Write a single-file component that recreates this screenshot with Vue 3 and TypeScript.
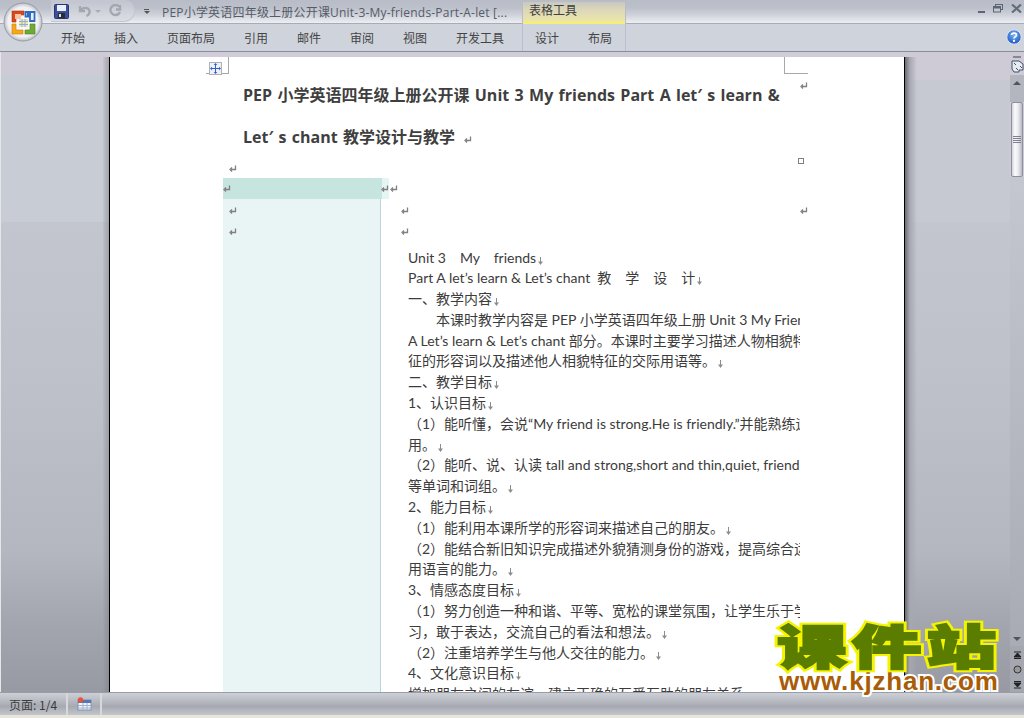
<script setup lang="ts">
const tabs: string[] = ['开始', '插入', '页面布局', '引用', '邮件', '审阅', '视图', '开发工具']
const lines: { t: string; mark: boolean }[] = [
  { t: 'Unit 3　My　friends', mark: true },
  { t: 'Part A let’s learn & Let’s chant\u2009\u2009 教　学　设　计', mark: true },
  { t: '一、教学内容', mark: true },
  { t: '　　本课时教学内容是 PEP 小学英语四年级上册 Unit 3 My Friends Part', mark: false },
  { t: 'A Let’s learn & Let’s chant 部分。本课时主要学习描述人物相貌特', mark: false },
  { t: '征的形容词以及描述他人相貌特征的交际用语等。', mark: true },
  { t: '二、教学目标', mark: true },
  { t: '1、认识目标', mark: true },
  { t: '（1）能听懂，会说“My friend is strong.He is friendly.”并能熟练运', mark: false },
  { t: '用。', mark: true },
  { t: '（2）能听、说、认读 tall and strong,short and thin,quiet, friendly', mark: false },
  { t: '等单词和词组。', mark: true },
  { t: '2、能力目标', mark: true },
  { t: '（1）能利用本课所学的形容词来描述自己的朋友。', mark: true },
  { t: '（2）能结合新旧知识完成描述外貌猜测身份的游戏，提高综合运', mark: false },
  { t: '用语言的能力。', mark: true },
  { t: '3、情感态度目标', mark: true },
  { t: '（1）努力创造一种和谐、平等、宽松的课堂氛围，让学生乐于学', mark: false },
  { t: '习，敢于表达，交流自己的看法和想法。', mark: true },
  { t: '（2）注重培养学生与他人交往的能力。', mark: true },
  { t: '4、文化意识目标', mark: true },
  { t: '增加朋友之间的友谊，建立正确的互爱互助的朋友关系。', mark: true },
]
</script>

<template>
  <div class="win">
    <svg class="defs" width="0" height="0">
      <symbol id="ret" viewBox="0 0 8 8">
        <path d="M6.500 .5V4.500H2M3 2.500L1 4.500L3 6.500" fill="none" stroke="#808080" stroke-width="1.300" />
      </symbol>
      <symbol id="brk" viewBox="0 0 5 8">
        <path d="M2.500 0V6" stroke="#8c8c8c" stroke-width="1" />
        <path d="M0 4.500H5L2.500 8Z" fill="#8c8c8c" />
      </symbol>
    </svg>

    <header class="titlebar">
      <div class="qat">
        <svg class="ico" width="15" height="15" viewBox="0 0 15 15">
          <rect x=".5" y=".5" width="14" height="14" rx="1" fill="#3c4f9c" stroke="#2a3570" />
          <rect x="3" y="1" width="9" height="6" fill="#e8eefa" />
          <rect x="4" y="9" width="7" height="5" fill="#2c2c34" />
          <rect x="5" y="10" width="2" height="3" fill="#e0e0e0" />
        </svg>
        <svg class="ico undo" width="15" height="14" viewBox="0 0 15 14">
          <path d="M3 2V7H8M3.500 6.500C6 3 11 3 12.500 6.500C13 9 11.500 11 9.500 12" fill="none" stroke="#a4a7b0" stroke-width="2.400" />
        </svg>
        <span class="drop grey"></span>
        <svg class="ico redo" width="13" height="14" viewBox="0 0 13 14">
          <path d="M10 2.500A5 5 0 1 0 11 8M11 1V5.500H7" fill="none" stroke="#a4a7b0" stroke-width="2.400" />
        </svg>
      </div>
      <span class="qat-more"><i></i><b></b></span>
      <span class="doc-title">PEP小学英语四年级上册公开课Unit-3-My-friends-Part-A-let [...</span>
      <div class="context-head"><span>表格工具</span></div>
      <div class="winbtns">
        <span class="w-min"></span>
        <svg width="10" height="9" viewBox="0 0 10 9">
          <rect x="2.500" y=".5" width="7" height="5" fill="none" stroke="#5d6472" />
          <rect x=".5" y="2.500" width="7" height="5.500" fill="#c6c9d2" stroke="#5d6472" />
          <rect x="1" y="3" width="6" height="1.500" fill="#5d6472" />
        </svg>
        <svg width="11" height="9" viewBox="0 0 11 9">
          <path d="M1 .5L10 8.500M10 .5L1 8.500" stroke="#666d7a" stroke-width="2.200" />
        </svg>
      </div>
    </header>

    <nav class="ribbon">
      <span v-for="t in tabs" :key="t" class="tab">{{ t }}</span>
      <div class="context-tabs">
        <span class="tab">设计</span>
        <span class="tab">布局</span>
      </div>
      <svg class="help" width="16" height="16" viewBox="0 0 16 16">
        <defs>
          <radialGradient id="hg" cx=".5" cy=".35" r=".7">
            <stop offset="0" stop-color="#7fb4f0" />
            <stop offset="1" stop-color="#0f4fc0" />
          </radialGradient>
        </defs>
        <circle cx="8" cy="8" r="7.200" fill="url(#hg)" stroke="#dfe6f2" />
        <path d="M5.500 6C5.700 3.500 10.500 3.500 10.500 6C10.500 7.800 8 7.600 8 9.500" fill="none" stroke="#fff" stroke-width="1.700" />
        <rect x="7" y="10.800" width="2" height="2" fill="#fff" />
      </svg>
    </nav>

    <main class="workspace">
      <div class="gutter-left"><div class="strip"></div></div>
      <section class="page">
        <div class="doc-head">
          <div class="doc-h">PEP 小学英语四年级上册公开课 Unit 3 My friends Part A let<span class="prime">′</span>s learn &amp;</div>
          <div class="doc-h">Let<span class="prime">′</span>s chant 教学设计与教学<svg class="ret after-h"><use href="#ret" /></svg></div>
        </div>
        <div class="mark-row"><svg class="ret"><use href="#ret" /></svg></div>
        <div class="tbl">
          <div class="cell-left">
            <div class="cell-head">
              <svg class="ret"><use href="#ret" /></svg>
              <svg class="ret"><use href="#ret" /></svg>
            </div>
            <div class="cell-mark"><svg class="ret"><use href="#ret" /></svg></div>
            <div class="cell-mark"><svg class="ret"><use href="#ret" /></svg></div>
          </div>
          <div class="cell-right">
            <div class="r-first"><svg class="ret"><use href="#ret" /></svg></div>
            <div class="r-mark"><svg class="ret"><use href="#ret" /></svg></div>
            <div class="r-mark"><svg class="ret"><use href="#ret" /></svg></div>
            <div class="body">
              <div v-for="(l, i) in lines" :key="i" class="ln">{{ l.t }}<svg v-if="l.mark" class="brk"><use href="#brk" /></svg></div>
            </div>
          </div>
        </div>
        <span class="crop crop-l"></span>
        <span class="crop crop-r"></span>
        <span class="handle">
          <svg width="11" height="11" viewBox="0 0 11 11">
            <path d="M5.500 0L7.300 2H6V5H9V3.700L11 5.500L9 7.300V6H6V9H7.300L5.500 11L3.700 9H5V6H2V7.300L0 5.500L2 3.700V5H5V2H3.700Z" fill="#2f62c8" />
          </svg>
        </span>
        <svg class="ret abs m1"><use href="#ret" /></svg>
        <svg class="ret abs m2"><use href="#ret" /></svg>
        <span class="sq"></span>
      </section>
      <div class="gutter-right"><div class="shadow"></div></div>
      <aside class="scroll">
        <div class="sb-grip"></div>
        <svg class="sb-ruler" width="13" height="13" viewBox="0 0 13 13">
          <path d="M1 1H8L12 4V10H8V12H3L1 9Z" fill="#e8eaf0" stroke="#40506c" />
          <path d="M3 3L5 5M9 6L11 8M5 8L7 10" stroke="#40506c" />
        </svg>
        <div class="sb-up"><i></i></div>
        <div class="sb-thumb"><i></i><i></i><i></i><i></i></div>
        <div class="sb-track"></div>
        <div class="sb-down"><i></i></div>
        <div class="sb-nav">
          <svg width="9" height="9" viewBox="0 0 9 9"><path d="M1 1H8M4.500 2L8 6H1Z M1 7.500H8" fill="#222" stroke="#222" /></svg>
          <svg width="9" height="9" viewBox="0 0 9 9"><circle cx="4.500" cy="4.500" r="3.500" fill="#999" stroke="#333" /></svg>
          <svg width="9" height="9" viewBox="0 0 9 9"><path d="M1 1.500H8M1 3H8L4.500 7Z M1 8H8" fill="#222" stroke="#222" /></svg>
        </div>
      </aside>

      <div class="watermark">
        <div class="wm-cn" data-t="课件站">课件站</div>
        <div class="wm-en">www.kjzhan.com</div>
      </div>
    </main>

    <footer class="status">
      <span class="st-cell st-page">页面: 1/4</span>
      <span class="st-cell st-icon">
        <svg width="15" height="14" viewBox="0 0 15 14">
          <rect x="1" y="3" width="13" height="10" fill="#f2f6fc" stroke="#7f93b4" />
          <rect x="1" y="3" width="13" height="3" fill="#5578b0" />
          <path d="M1 8.500H14M1 11H14M6 6V13M10 6V13" stroke="#9fb2cc" />
          <circle cx="3.500" cy="3" r="2.700" fill="#e0583a" />
        </svg>
      </span>
    </footer>
    <div class="foot-line"></div>

    <div class="office-btn">
      <svg width="46" height="44" viewBox="0 0 46 44">
        <defs>
          <radialGradient id="ob" cx=".5" cy=".5" r=".55">
            <stop offset="0" stop-color="#ffffff" />
            <stop offset=".72" stop-color="#f0f0f3" />
            <stop offset=".86" stop-color="#c9cbd2" />
            <stop offset="1" stop-color="#8f929c" />
          </radialGradient>
        </defs>
        <circle cx="23" cy="22" r="19" fill="url(#ob)" stroke="#9a9da6" />
        <path d="M12 11H24V15H16V22H12Z" fill="#d8481c" stroke="#a8320e" stroke-width=".6" />
        <rect x="15" y="14" width="6" height="5" fill="#f6c2a8" />
        <path d="M25.500 12H34.500V21H30V16.500H25.500Z" fill="#eaf0f8" stroke="#2f6bc0" stroke-width="1.800" />
        <rect x="27" y="13" width="4" height="3" fill="#2f6bc0" />
        <path d="M12 24H16V30H23V34H12Z" fill="#f5a81c" stroke="#cc8008" stroke-width=".6" />
        <path d="M25 30H30V24H35V34H25Z" fill="#6fab34" stroke="#4d7e1c" stroke-width=".6" />
        <rect x="19" y="19" width="9" height="8" fill="#f6e6ae" />
        <path d="M19 21.500H28M19 24.500H28M22 19V27M25 19V27" stroke="#8cb0d8" />
      </svg>
    </div>
  </div>
</template>

<style>
html, body { margin: 0; padding: 0; overflow: hidden; }
</style>

<style scoped>
.win {
  width: 1024px; height: 718px; display: flex; flex-direction: column; overflow: hidden; position: relative;
  font-family: "Noto Sans CJK SC", "Noto Sans", sans-serif; font-size: 12px; color: #444; background: #e8e5da;
}
.defs { position: absolute; }
.titlebar {
  height: 24px; flex: none; display: flex; align-items: center; position: relative; box-sizing: border-box;
  padding-left: 51px; border-bottom: 1px solid #a9acb6;
  background: linear-gradient(#b9bcc6 0, #bcc0ca 8px, #cfd2da 15px, #eceef3 23px);
}
.qat {
  width: 84px; height: 22px; box-sizing: border-box; display: flex; align-items: center; padding-left: 3px; margin-top: -1px;
  border: 1px solid #c4c7d0; border-left: 0; border-radius: 0 12px 12px 0; background: linear-gradient(#c2c5cf, #dcdee5);
}
.undo { margin-left: 8px; }
.drop { width: 0; height: 0; border: 3px solid transparent; border-top: 3px solid #a9acb6; border-bottom: 0; margin: 0 8px 0 3px; }
.qat-more { width: 7px; margin-left: 8px; display: flex; flex-direction: column; align-items: center; gap: 1px; }
.qat-more i { width: 5px; height: 1px; background: #555; }
.qat-more b { width: 0; height: 0; border: 3px solid transparent; border-top: 3px solid #555; border-bottom: 0; }
.doc-title { margin-left: 12px; font-family: "Open Sans", "Noto Sans CJK SC", sans-serif; font-size: 12px; letter-spacing: .2px; color: #555b68; white-space: nowrap; width: 358px; }
.context-head {
  position: absolute; left: 522px; top: 2px; width: 104px; height: 22px; box-sizing: border-box;
  border: 1px solid #b8bcc8; border-width: 0 1px; overflow: hidden;
  background: linear-gradient(#c8c8c0 0, #dcd8b8 8px, #ebe3ad 18px, #f9f06e 21px, #f0e7a5 23px);
}
.context-head span { position: absolute; left: 6px; top: -1px; line-height: 18px; font-size: 12px; color: #3e3e3e; }
.winbtns { position: absolute; right: 2px; top: 4px; display: flex; align-items: flex-start; gap: 8px; }
.w-min { width: 7px; height: 2px; background: #5d6472; margin-top: 7px; }
.ribbon {
  height: 28px; flex: none; display: flex; align-items: center; box-sizing: border-box; position: relative;
  padding-left: 61px; gap: 29px; background: #cfd3dc; border-bottom: 1px solid #8a8e98;
}
.tab { line-height: 18px; color: #444; white-space: nowrap; }
.context-tabs {
  position: absolute; left: 522px; top: 0; width: 104px; height: 27px; box-sizing: border-box; padding-left: 12px;
  display: flex; align-items: center; gap: 29px; border: 1px solid #b9bfd0; border-width: 0 1px;
}
.help { position: absolute; right: 2px; top: 5px; }
.workspace { flex: 1; min-height: 0; display: flex; position: relative; background: #d0cdd8; }
.gutter-left {
  width: 109px; flex: none; border-left: 1px solid #e4e6ea; box-sizing: border-box; position: relative;
  background: linear-gradient(#cfcbd6 0, #cfcbd6 22px, #c8ccd4 22px, #c8ccd4 170px, #c3c6ce 170px, #bec1ca 330px, #b4b7c0 500px, #a3a6ae 570px, #979aa3 100%);
}
.strip { position: absolute; right: 0; top: 5px; bottom: 0; width: 6px; background: linear-gradient(90deg, rgba(150,153,162,.15), rgba(120,123,132,.5)); }
.page {
  width: 796px; flex: none; box-sizing: border-box; position: relative; overflow: hidden;
  border: solid #000; border-width: 0 1px; background: #fff;
  margin-top: 5px; padding-top: 17px;
}
.doc-head { margin-left: 133px; }
.doc-h { font-family: "Open Sans", "Noto Sans CJK SC", sans-serif; font-weight: 700; font-size: 16px; line-height: 42px; color: #3f3f3f; white-space: nowrap; word-spacing: 1.200px; }
.prime { display: inline-block; width: 10px; line-height: 1; }
.ret { width: 8px; height: 8px; display: inline-block; flex: none; }
.after-h { margin-left: 9px; vertical-align: -1px; }
.mark-row { height: 20px; box-sizing: border-box; padding-top: 2px; margin-left: 119px; display: flex; align-items: center; }
.tbl { display: flex; margin-left: 113px; }
.cell-left { width: 157px; flex: none; background: #e9f5f5; border-right: 1px solid #bdd2e2; min-height: 600px; }
.cell-head {
  height: 21px; width: 166px; background: linear-gradient(90deg, #c5e5de 159px, #e6f4f4 159px); display: flex; align-items: center; justify-content: space-between;
  position: relative; z-index: 1; padding-right: 0;
}
.cell-mark { height: 21px; box-sizing: border-box; padding: 2px 0 0 6px; display: flex; align-items: center; }
.cell-right { flex: 1; min-width: 0; }
.r-first { height: 21px; display: flex; align-items: center; padding-left: 9px; }
.r-mark { height: 21px; box-sizing: border-box; padding: 2px 0 0 20px; display: flex; align-items: center; }
.body { margin: 6.500px 0 0 27px; width: 392px; overflow: hidden; }
.ln { font-family: "Lato", "Noto Sans CJK SC", sans-serif; font-size: 14px; height: 20.800px; line-height: 20.800px; color: #3c3c3c; white-space: nowrap; }
.brk { width: 5px; height: 8px; margin-left: 2px; vertical-align: -2px; }
.crop { position: absolute; top: 0; height: 16px; border-bottom: 1px solid #a8a8a8; }
.crop-l { left: 96px; width: 22px; border-right: 1px solid #a8a8a8; }
.crop-r { left: 674px; width: 23px; border-left: 1px solid #a8a8a8; }
.handle {
  position: absolute; left: 99px; top: 5px; width: 13px; height: 13px; box-sizing: border-box; border: 1px solid #b0b0b8;
  background: #eef0f6; display: flex; align-items: center; justify-content: center;
}
.abs { position: absolute; }
.m1 { left: 690px; top: 25px; }
.m2 { left: 690px; top: 150px; }
.sq { position: absolute; left: 688px; top: 101px; width: 6px; height: 6px; box-sizing: border-box; border: 1px solid #808080; }
.gutter-right {
  flex: 1; min-width: 0; position: relative;
  background: linear-gradient(#cfcbd6 0, #cfcbd6 28px, #c6c9d1 28px, #c6c9d1 170px, #c3c6ce 170px, #bec1ca 330px, #b4b7c0 500px, #a3a6ae 570px, #979aa3 100%);
}
.shadow { position: absolute; left: 0; top: 5px; bottom: 0; width: 12px; background: linear-gradient(90deg, #6a6c72, #a6a8b0 40%, rgba(180,182,190,0)); }
.scroll { width: 14px; flex: none; display: flex; flex-direction: column; align-items: center; background: #cfcbd6; }
.sb-grip { width: 8px; height: 2px; background: #848894; margin-top: 4px; flex: none; }
.sb-ruler { margin-top: 2px; flex: none; }
.sb-up { width: 100%; height: 27px; flex: none; display: flex; justify-content: center; padding-top: 6px; margin-top: 2px; box-sizing: border-box; background: #b3b6bf; }
.sb-up i { width: 0; height: 0; border: 4px solid transparent; border-bottom: 4px solid #4f5361; border-top: 0; }
.sb-thumb {
  width: 12px; height: 75px; flex: none; box-sizing: border-box; border: 1px solid #8d909b; border-radius: 2px;
  background: linear-gradient(90deg, #d0d3da, #fafbfc 30%, #eaecef 60%, #b7bac3);
  display: flex; flex-direction: column; align-items: center; justify-content: center; gap: 1px;
}
.sb-thumb i { width: 8px; height: 1px; background: #7d818d; }
.sb-track { flex: 1; width: 100%; background: linear-gradient(#c4c7cf, #a9acb5); }
.sb-down { width: 100%; height: 14px; flex: none; display: flex; justify-content: center; padding-top: 5px; box-sizing: border-box; background: #a9acb5; }
.sb-down i { width: 0; height: 0; border: 4px solid transparent; border-top: 4px solid #4f5361; border-bottom: 0; }
.sb-nav { height: 46px; width: 100%; flex: none; display: flex; flex-direction: column; align-items: center; justify-content: space-around; background: #a4a7b0; padding-top: 2px; box-sizing: border-box; }
.watermark { position: absolute; left: 777px; top: 566px; width: 230px; pointer-events: none; }
.wm-cn {
  position: relative; font-family: "Noto Sans CJK SC", sans-serif; font-weight: 900; font-size: 47px; line-height: 52px; letter-spacing: 3.500px; white-space: nowrap;
  color: #5a7d00; -webkit-text-stroke: 6px #f4f400; paint-order: stroke fill;
  transform: scaleX(1.480); transform-origin: left center;
}
.wm-cn::after {
  content: attr(data-t); position: absolute; left: 0; top: 0;
  -webkit-text-stroke: 2px #5a7d00;
}
.wm-en {
  font-family: "Liberation Sans", sans-serif; font-weight: 700; font-size: 26px; letter-spacing: .8px; line-height: 20px; margin-top: 1px; margin-left: 2px; white-space: nowrap;
  color: #a85c08; -webkit-text-stroke: 4px #fff; paint-order: stroke fill;
}
.status {
  height: 23px; flex: none; display: flex; box-sizing: border-box; border-top: 1px solid #9a9ca8;
  background: linear-gradient(#cdd0d5, #aeb1b9 50%, #a6a9b1 60%, #c4c6cc);
}
.st-cell { display: flex; align-items: center; box-sizing: border-box; border-right: 2px solid #d6d8dc; }
.st-page { width: 68px; padding-left: 9px; color: #3c3c3c; font-size: 12px; white-space: nowrap; }
.st-icon { width: 34px; justify-content: center; }
.foot-line { height: 3px; flex: none; background: #e8e5da; }
.office-btn { position: absolute; left: 0; top: 0; width: 46px; height: 44px; }
</style>
